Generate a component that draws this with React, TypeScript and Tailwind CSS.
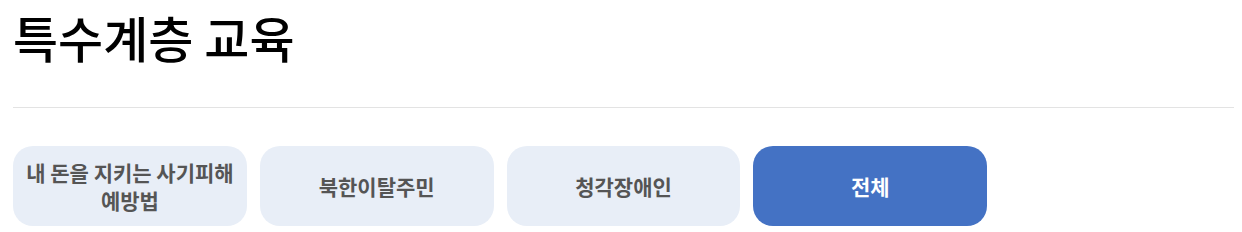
import React from 'react';

const tabs = [
  { label: ['내 돈을 지키는 사기피해', '예방법'], active: false },
  { label: ['북한이탈주민'], active: false },
  { label: ['청각장애인'], active: false },
  { label: ['전체'], active: true },
];

export default function App() {
  return (
    <div
      className="w-[1242px] h-[232px] bg-white pl-[13px] pr-[8px] pt-[5px]"
      style={{ fontFamily: '"Noto Sans CJK KR", "Noto Sans", sans-serif' }}
    >
      <h1 className="text-[49px] leading-[63px] font-medium text-black">특수계층 교육</h1>
      <div className="mt-[39px] h-px bg-[#e3e3e3]" />
      <div className="mt-[38px] grid grid-cols-5 gap-[13px]">
        {tabs.map((t) => (
          <button
            key={t.label.join('')}
            className={`h-[80px] rounded-[20px] flex flex-col items-center justify-center px-2 text-[21px] leading-[28px] font-bold ${
              t.active ? 'bg-[#4472c4] text-white' : 'bg-[#e8eef7] text-[#555555]'
            }`}
          >
            {t.label.map((l) => (
              <span key={l} className="whitespace-nowrap">{l}</span>
            ))}
          </button>
        ))}
      </div>
    </div>
  );
}
